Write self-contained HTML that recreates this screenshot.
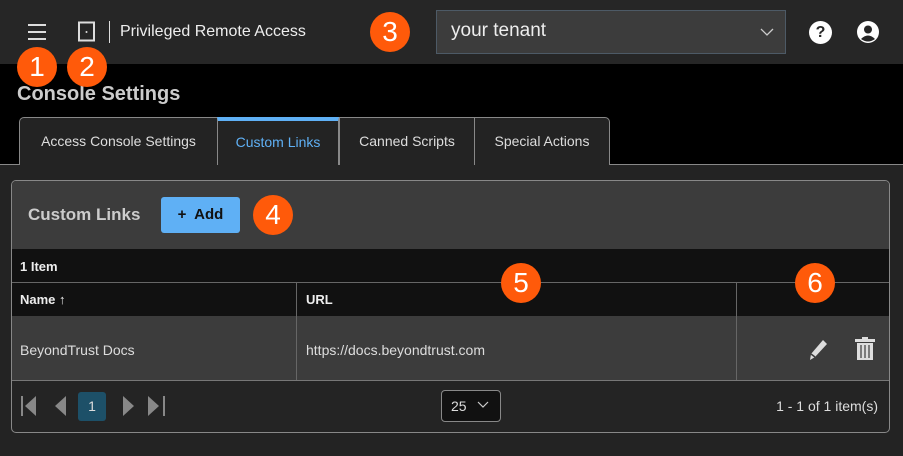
<!DOCTYPE html>
<html><head><style>
*{box-sizing:border-box;margin:0;padding:0}
body{width:903px;height:456px;background:#232323;font-family:"Liberation Sans",sans-serif;position:relative;overflow:hidden;color:#ddd}
.abs{position:absolute}
.badge{position:absolute;width:40px;height:40px;border-radius:50%;background:#ff5a0a;color:#fff;font-size:28px;text-align:center;line-height:40px;z-index:5}
.tab{position:absolute;top:117px;height:48px;border:1px solid #888;border-bottom:none;background:#232323;color:#ddd;font-size:14px;line-height:46px;text-align:center}
</style></head><body>
<div class="abs" style="left:0;top:0;width:903px;height:64px;background:#262626"></div>
<div class="abs" style="left:0;top:64px;width:903px;height:100px;background:#000"></div>
<div class="abs" style="left:0;top:164px;width:903px;height:1px;background:#888"></div>
<div class="abs" style="left:28px;top:24px;width:18px;height:2px;background:#ddd"></div>
<div class="abs" style="left:28px;top:31px;width:18px;height:2px;background:#ddd"></div>
<div class="abs" style="left:28px;top:38px;width:18px;height:2px;background:#ddd"></div>
<svg class="abs" style="left:77px;top:21px" width="20" height="22" viewBox="0 0 20 22"><rect x="2" y="1.5" width="15" height="18" fill="none" stroke="#ddd" stroke-width="2"/><rect x="4" y="3" width="8" height="15" fill="#262626"/><circle cx="9.5" cy="11" r="1" fill="#ddd"/></svg>
<div class="abs" style="left:109px;top:21px;width:1px;height:22px;background:#ddd"></div>
<div class="abs" style="left:120px;top:23px;font-size:16px;color:#eee">Privileged Remote Access</div>
<div class="abs" style="left:436px;top:10px;width:350px;height:44px;background:#3c3c3c;border:1px solid #4d5a66"></div>
<div class="abs" style="left:451px;top:20px;font-size:19px;color:#eee">your tenant</div>
<svg class="abs" style="left:760px;top:27px" width="14" height="10"><path d="M1 2 L7 8 L13 2" fill="none" stroke="#ccc" stroke-width="1.3"/></svg>
<div class="abs" style="left:809px;top:21px;width:23px;height:23px;border-radius:50%;background:#fff;color:#262626;font-weight:bold;font-size:16px;text-align:center;line-height:23px">?</div>
<svg class="abs" style="left:856px;top:20px" width="24" height="24" viewBox="0 0 24 24"><circle cx="12" cy="12" r="11" fill="#fff"/><circle cx="12" cy="9.5" r="4" fill="#262626"/><path d="M5 19 Q12 12 19 19 Q12 24 5 19Z" fill="#262626"/></svg>
<div class="abs" style="left:17px;top:83px;font-size:20px;font-weight:bold;color:#ccc">Console Settings</div>
<div class="tab" style="left:19px;width:199px;border-top-left-radius:5px">Access Console Settings</div>
<div class="tab" style="left:217px;width:122px;color:#5fb0f5;border-top:4px solid #5fb0f5;line-height:42px">Custom Links</div>
<div class="tab" style="left:339px;width:136px">Canned Scripts</div>
<div class="tab" style="left:474px;width:136px;border-top-right-radius:5px">Special Actions</div>
<div class="abs" style="left:11px;top:180px;width:879px;height:253px;border:1px solid #888;border-radius:5px;background:#242424;overflow:hidden">
 <div class="abs" style="left:0;top:0;width:879px;height:68px;background:#3c3c3c"></div>
 <div class="abs" style="left:16px;top:24px;font-size:17px;font-weight:bold;color:#ccc">Custom Links</div>
 <div class="abs" style="left:149px;top:16px;width:79px;height:36px;background:#5fb0f5;border-radius:3px;color:#111;font-size:15px;font-weight:bold;text-align:center;line-height:36px">+&nbsp; Add</div>
 <div class="abs" style="left:0;top:68px;width:879px;height:67px;background:#111"></div>
 <div class="abs" style="left:0;top:101px;width:879px;height:1px;background:#666"></div>
 <div class="abs" style="left:8px;top:78px;font-size:13px;font-weight:bold;color:#eee">1 Item</div>
 <div class="abs" style="left:8px;top:111px;font-size:13px;font-weight:bold;color:#eee">Name ↑</div>
 <div class="abs" style="left:294px;top:111px;font-size:13px;font-weight:bold;color:#eee">URL</div>
 <div class="abs" style="left:0;top:135px;width:879px;height:64px;background:#3c3c3c"></div>
 <div class="abs" style="left:0;top:199px;width:879px;height:1px;background:#777"></div>
 <div class="abs" style="left:284px;top:101px;width:1px;height:98px;background:#666"></div>
 <div class="abs" style="left:724px;top:101px;width:1px;height:98px;background:#666"></div>
 <div class="abs" style="left:8px;top:161px;font-size:14px;color:#ddd">BeyondTrust Docs</div>
 <div class="abs" style="left:294px;top:161px;font-size:14px;color:#ddd">https://docs.beyondtrust.com</div>
 <svg class="abs" style="left:794px;top:155px" width="24" height="26" viewBox="0 0 24 26"><path d="M4 24 L5 18 L17 4 L21 8 L9 21 Z" fill="#ddd"/><path d="M5 18 L9 21" stroke="#3c3c3c" stroke-width="1.5"/></svg>
 <svg class="abs" style="left:842px;top:155px" width="22" height="26" viewBox="0 0 22 26"><rect x="1" y="3" width="20" height="3" fill="#ddd"/><rect x="8" y="1" width="6" height="3" fill="#ddd"/><path d="M3 7 H19 V24 H3Z" fill="#ddd"/><path d="M7 9 V22 M11 9 V22 M15 9 V22" stroke="#3c3c3c" stroke-width="1.2"/></svg>
 <svg class="abs" style="left:8px;top:213px" width="160" height="24"><path d="M2 2 V22" stroke="#888" stroke-width="2"/><path d="M16 2 V22 L5 12Z" fill="#888"/><path d="M46 2 V22 L35 12Z" fill="#888"/><path d="M103 2 V22 L114 12Z" fill="#888"/><path d="M128 2 V22 L139 12Z" fill="#888"/><path d="M144 2 V22" stroke="#888" stroke-width="2"/></svg>
 <div class="abs" style="left:66px;top:211px;width:28px;height:29px;background:#1d5068;border-radius:3px;color:#ddd;font-size:14px;text-align:center;line-height:29px">1</div>
 <div class="abs" style="left:429px;top:209px;width:60px;height:32px;background:#111;border:1px solid #888;border-radius:4px;color:#ddd;font-size:14px;line-height:30px;padding-left:9px">25</div>
 <svg class="abs" style="left:465px;top:220px" width="12" height="8"><path d="M1 1 L6 6 L11 1" fill="none" stroke="#ccc" stroke-width="1.2"/></svg>
 <div class="abs" style="right:11px;top:217px;font-size:14px;color:#ddd">1 - 1 of 1 item(s)</div>
</div>
<div class="badge" style="left:17px;top:47px">1</div>
<div class="badge" style="left:67px;top:47px">2</div>
<div class="badge" style="left:370px;top:12px">3</div>
<div class="badge" style="left:253px;top:195px">4</div>
<div class="badge" style="left:501px;top:263px">5</div>
<div class="badge" style="left:795px;top:263px">6</div>
</body></html>
